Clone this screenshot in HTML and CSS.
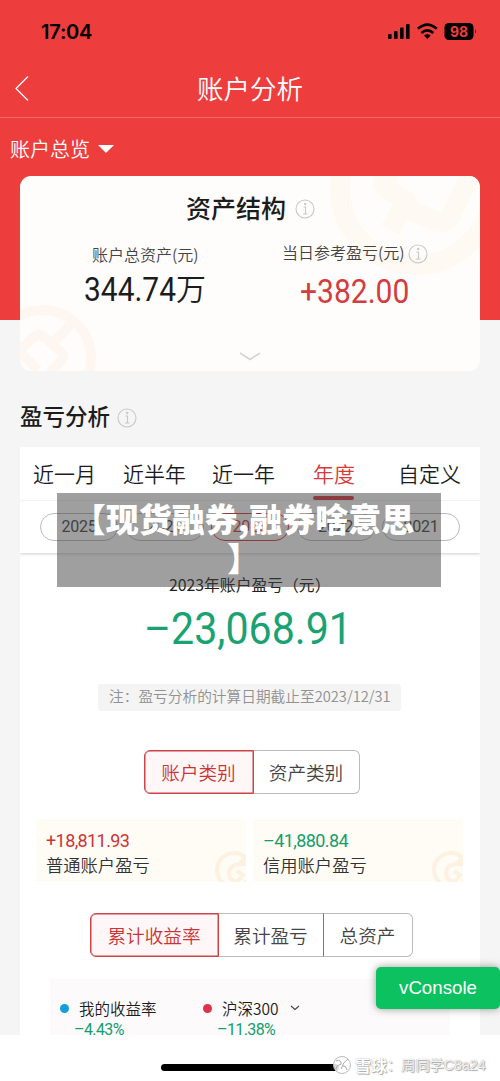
FILE: index.html
```html
<!DOCTYPE html>
<html lang="zh-CN">
<head>
<meta charset="utf-8">
<title>账户分析</title>
<link rel="stylesheet" href="styles.css">
</head>
<body>
<div class="screen">
  <header class="hero">
    <div class="status">
      <span class="clock">17:04</span>
      <svg class="status-icons" width="90" height="18" viewBox="0 0 90 18">
        <rect x="1" y="12" width="3.6" height="5" rx="1"/><rect x="7" y="9" width="3.6" height="8" rx="1"/><rect x="13" y="5.500" width="3.600" height="11.500" rx="1"/><rect x="19" y="2" width="3.600" height="15" rx="1"/>
        <g fill="none" stroke="#000" stroke-width="2.700"><path d="M31 6.700Q40.300-1.600 49.700 6.700"/><path d="M34.400 11Q40.300 5.800 46.300 11"/></g>
        <path d="M37 13.500Q40.300 11 43.700 13.500L40.300 17Z"/>
        <rect x="57.500" y="1" width="29" height="17" rx="4.500"/><path d="M88 7.500q2 2 0 4z"/>
        <text x="72" y="14.600" text-anchor="middle" class="battery">98</text>
      </svg>
    </div>
    <nav class="navbar">
      <svg class="back" width="16" height="28" viewBox="0 0 16 28"><path d="M14 1.500 2 13.500 14 25.500" fill="none" stroke="#fff" stroke-width="1.300"/></svg>
      <h1 class="title">账户分析</h1>
    </nav>
    <div class="picker">账户总览<i class="caret"></i></div>
  </header>

  <section class="assets">
    <svg class="mark mark-top" width="160" height="105" viewBox="330 176 160 105" fill="none" stroke="#fef9f2" stroke-width="20"><circle cx="416" cy="189" r="76"/><path d="M392 170q-14 13-5 19l20 12-17 29M397 204l38 17q12 4 16-6l22-45" stroke-linejoin="round"/></svg>
    <svg class="mark mark-bottom" width="80" height="66" viewBox="20 305 80 66" fill="none" stroke="#fef7f1" stroke-width="10"><circle cx="43" cy="358" r="48"/><path d="M20 350 35 336q5-3 9 1l17 15q5 5 0 9l-11 12M20 352l18 18M53 343l23-24" stroke-linejoin="round"/></svg>
    <div class="assets-head"><h2 class="heading">资产结构</h2><svg class="info" viewBox="0 0 20 20"><circle cx="10" cy="10" r="9"/><path d="M8.500 8h2v7M8 15h4.500"/><circle cx="10.200" cy="5" r=".7"/></svg></div>
    <div class="assets-grid">
      <div class="asset asset-total">
        <span class="asset-label">账户总资产(元)</span>
        <div class="amount"><span class="num">344.74</span><span class="unit">万</span></div>
      </div>
      <div class="asset asset-day">
        <div class="label-row"><span class="asset-label">当日参考盈亏(元)</span><svg class="info" viewBox="0 0 20 20"><circle cx="10" cy="10" r="9"/><path d="M8.500 8h2v7M8 15h4.500"/><circle cx="10.200" cy="5" r=".7"/></svg></div>
        <div class="amount gain"><span class="num">+382.00</span></div>
      </div>
    </div>
    <svg class="expand" width="22" height="9" viewBox="0 0 22 9"><path d="M1 1 11 7.500 21 1" fill="none" stroke="#d3d3d3" stroke-width="1.500"/></svg>
  </section>

  <div class="section-head"><h2 class="heading heading-small">盈亏分析</h2><svg class="info" viewBox="0 0 20 20"><circle cx="10" cy="10" r="9"/><path d="M8.500 8h2v7M8 15h4.500"/><circle cx="10.200" cy="5" r=".7"/></svg></div>

  <section class="profit">
    <div class="filters">
      <div class="tabs"><span>近一月</span><span>近半年</span><span>近一年</span><span class="tab-active">年度</span><span>自定义</span></div>
      <div class="years"><span>2025</span><span>2024</span><span class="year-active">2023</span><span>2022</span><span>2021</span></div>
    </div>
    <div class="result-label">2023年账户盈亏（元）</div>
    <div class="result"><span class="num">–23,068.91</span></div>
    <div class="note">注：盈亏分析的计算日期截止至2023/12/31</div>
    <div class="segments seg-category"><span class="seg seg-on">账户类别</span><span class="seg">资产类别</span></div>
    <div class="cards">
      <div class="card"><span class="card-num red">+18,811.93</span><span class="card-label">普通账户盈亏</span>
        <svg class="coin" width="32" height="32" viewBox="0 0 32 32"><circle cx="20" cy="20" r="17"/><path d="M32 8 25 14M32 14h-6q-11 1-11 9t9 8l5-6-6-4"/></svg></div>
      <div class="card"><span class="card-num green">–41,880.84</span><span class="card-label">信用账户盈亏</span>
        <svg class="coin" width="32" height="32" viewBox="0 0 32 32"><circle cx="20" cy="20" r="17"/><path d="M32 8 25 14M32 14h-6q-11 1-11 9t9 8l5-6-6-4"/></svg></div>
    </div>
    <div class="segments seg-metric"><span class="seg seg-on">累计收益率</span><span class="seg">累计盈亏</span><span class="seg">总资产</span></div>
    <div class="legend">
      <div class="legend-item"><div class="legend-name"><i class="dot blue"></i>我的收益率</div><div class="legend-value">–4.43%</div></div>
      <div class="legend-item"><div class="legend-name"><i class="dot crimson"></i>沪深300<svg class="more" width="10" height="6" viewBox="0 0 10 6"><path d="M1 1l4 3.500L9 1" fill="none" stroke="#444" stroke-width="1.100"/></svg></div><div class="legend-value">–11.38%</div></div>
    </div>
  </section>
  <footer class="bottom"><div class="home-bar"></div></footer>

  <div class="caption">【现货融券,融券啥意思<br>】</div>
  <button class="console">vConsole</button>
  <div class="watermark">
    <svg width="20" height="20" viewBox="0 0 20 20" fill="none" stroke="#aaa"><circle cx="10" cy="10" r="8.500" stroke="#bbb" fill="#fff" fill-opacity=".85"/><path d="M4 6q3-2 5 1 1 3-2 3-3 1-3 4M16 4q-5 3-7 10M11 11q3-1 4 4"/></svg>
    <b>雪球</b><span class="author">：周同学C8a24</span>
  </div>
</div>
</body>
</html>
```
FILE: styles.css
```css
* { box-sizing: border-box; }
body { margin: 0; }
h1, h2 { margin: 0; }
.screen { position: relative; width: 500px; height: 1081px; overflow: hidden; background: #f5f5f5; font-weight: 350; color: #1c1c1c; font-family: "Noto Sans CJK SC", sans-serif; }
.hero { height: 320px; background: #ed3d3d; color: #fff; }
.status { height: 60px; padding: 22px 23px 0 41px; display: flex; justify-content: space-between; align-items: flex-start; color: #000; }
.clock { font: 600 20px/20px Inter, sans-serif; letter-spacing: -.2px; }
.battery { font: 700 14px Inter, sans-serif; fill: #ed3d3d; }
.navbar { height: 58px; padding-left: 14px; display: flex; align-items: center; border-bottom: 1px solid #f16a66; }
.title { width: 106px; margin-left: 167px; font-size: 26.5px; font-weight: 350; line-height: 56px; height: 58px; white-space: nowrap; }
.picker { padding-left: 10px; display: flex; align-items: center; height: 61px; font-size: 20px; }
.caret { margin-left: 8px; border: 8px solid transparent; border-top-color: #fff; border-bottom: 0; }

.assets { position: relative; margin: -144px 20px 0; height: 195px; border-radius: 11px; background: #fffdfc; overflow: hidden; display: flex; flex-direction: column; }
.mark { position: absolute; }
.mark-top { right: -10px; top: 0; }
.mark-bottom { left: 0; bottom: 0; }
.assets-head { position: relative; display: flex; align-items: center; height: 63px; padding-left: 166px; gap: 9px; }
.heading { font-size: 25px; line-height: 34px; font-weight: 500; white-space: nowrap; }
.assets-head .heading { padding-bottom: 2px; }
.info { width: 20px; height: 20px; flex: none; fill: none; stroke: #c8c8c8; stroke-width: 1.1; margin-top: 3px; }
.assets-grid { position: relative; display: flex; height: 107px; }
.asset-total { width: 230px; padding: 3px 0 0 72px; }
.asset-day { padding: 1px 0 0 32px; }
.label-row { display: flex; gap: 3px; align-items: center; }
.asset-label { display: block; font-size: 16px; line-height: 24px; color: #444; white-space: nowrap; }
.amount { display: flex; align-items: center; height: 44px; }
.num { font-family: Roboto, sans-serif; font-weight: 400; transform-origin: left center; white-space: nowrap; }
.asset-total .amount { margin: 1px 0 0 -8px; }
.asset-total .num { width: 92px; font-size: 34px; transform: scaleX(.88); }
.unit { font-size: 30px; line-height: 40px; height: 44px; }
.gain { color: #d23d3f; margin: 5px 0 0 18px; }
.gain .num { font-size: 33px; transform: scaleX(.91); }
.expand { align-self: center; margin-top: 6px; }

.section-head { height: 76px; padding: 13px 0 0 20px; display: flex; gap: 7px; align-items: flex-start; }
.heading-small { font-size: 22.5px; line-height: 64px; margin-top: -1px; }
.section-head .info { margin-top: 24px; }

.profit { margin: 0 20px; height: 588px; background: #fff; overflow: hidden; display: flex; flex-direction: column; }
.filters { height: 106px; flex: none; box-shadow: 0 1px 3px rgba(0,0,0,.2); }
.tabs { height: 54px; display: grid; grid-template-columns: 90px 89px 101px 85px 70px; padding-left: 13px; border-bottom: 1px solid #f1f1f1; font-size: 21px; line-height: 52px; white-space: nowrap; }
.tab-active { color: #d8393c; width: 41px; display: flex; flex-direction: column; }
.tab-active::after { content: ""; height: 4px; margin-top: -3px; flex: none; border-radius: 2px; background: #d8393c; }
.years { display: grid; grid-template-columns: repeat(5, 78px); justify-content: space-between; padding: 12px 20px 0; }
.years span { height: 28px; border: 1px solid #bbb; border-radius: 14px; text-align: center; font: 400 16px/26px Roboto, sans-serif; letter-spacing: -.3px; color: #444; }
.years .year-active { border-color: #d8393c; color: #d8393c; background: #fff8f8; }
.result-label { height: 62px; padding: 21px 0 0 149px; font-size: 15.800px; line-height: 22px; font-weight: 400; color: #222; white-space: nowrap; flex: none; }
.result { height: 54px; margin-top: -17px; padding-left: 124px; flex: none; color: #1ba272; font-size: 45px; line-height: 54px; }
.result .num { display: inline-block; transform: scaleX(.915); }
.note { width: 303px; height: 27px; margin: 32px 0 0 78px; padding-left: 11px; border-radius: 3px; background: #f4f4f4; color: #919191; font-size: 14.700px; line-height: 24px; white-space: nowrap; flex: none; }
.segments { height: 44px; flex: none; display: grid; font-size: 18.600px; line-height: 41px; color: #444; text-align: center; white-space: nowrap; }
.seg { border: 1px solid #bbb; border-left-width: 0; padding-right: 1px; }
.seg:last-child { border-radius: 0 6px 6px 0; }
.seg-on { color: #ca3438; border: 1px solid #cd4448; border-radius: 6px 0 0 6px; background: #fff7f7; box-shadow: inset 0 0 0 .5px #cd4448; }
.seg-category { margin: 39px 0 0 124px; grid-template-columns: 110px 106px; }
.seg-metric { margin: 31px 0 0 70px; grid-template-columns: 129px 105px 89px; }
.seg-metric .seg:nth-child(2) { border-right-color: #777; }
.cards { display: grid; grid-template-columns: 210px 210px; gap: 7px; margin: 25px 0 0 16px; flex: none; }
.card { position: relative; height: 63px; padding: 10px 0 0 10px; background: #fffcf6; overflow: hidden; display: flex; flex-direction: column; }
.card-num { font: 400 18px/24px Roboto, sans-serif; letter-spacing: -.6px; }
.card-label { font-size: 17.300px; line-height: 24px; color: #333; }
.coin { position: absolute; right: 0; bottom: 0; fill: none; stroke: #fdf2e1; stroke-width: 4; }
.red { color: #cb3438; }
.green { color: #169d6c; }
.legend { display: grid; grid-template-columns: 143px 240px; width: 400px; height: 60px; margin: 22px 0 0 30px; padding: 17px 0 0 10px; background: #fcfafb; flex: none; }
.legend-name { display: flex; align-items: center; font-size: 15.500px; line-height: 24px; white-space: nowrap; }
.dot { width: 9px; height: 9px; border-radius: 50%; margin-right: 10px; }
.blue { background: #109fdc; }
.crimson { background: #df3149; }
.more { margin-left: 11px; }
.legend-value { padding-left: 14px; font: 400 16px/20px Roboto, sans-serif; letter-spacing: -.6px; color: #169d6c; }
.bottom { height: 46px; background: #fff; padding: 29px 0 0 161px; }
.home-bar { width: 178px; height: 7px; border-radius: 4px; background: #000; }

.caption { position: absolute; left: 57px; top: 493px; width: 384px; height: 94px; padding: 6px 25px 0 14px; background: rgba(64,64,64,.5); color: #fff; font-size: 33px; line-height: 39px; font-weight: 900; text-align: center; white-space: nowrap; }
.console { position: absolute; left: 376px; top: 967px; width: 124px; height: 42px; padding: 0; border: 0; border-radius: 5px; background: #0bc160; color: #fff; font: 18.700px/42px "Liberation Sans", sans-serif; box-shadow: 0 0 9px rgba(0,0,0,.4); }
.watermark { position: absolute; left: 332px; top: 1055px; display: flex; align-items: center; height: 20px; gap: 3px; font-size: 16px; color: #fff; text-shadow: 0 0 1px #999, 1px 1px 1px #aaa; white-space: nowrap; }
.watermark b { font-weight: 700; }
.author { margin-left: -3px; font: 400 14.200px/20px "Liberation Sans", "Noto Sans CJK SC", sans-serif; color: #f2f2f2; }
```
